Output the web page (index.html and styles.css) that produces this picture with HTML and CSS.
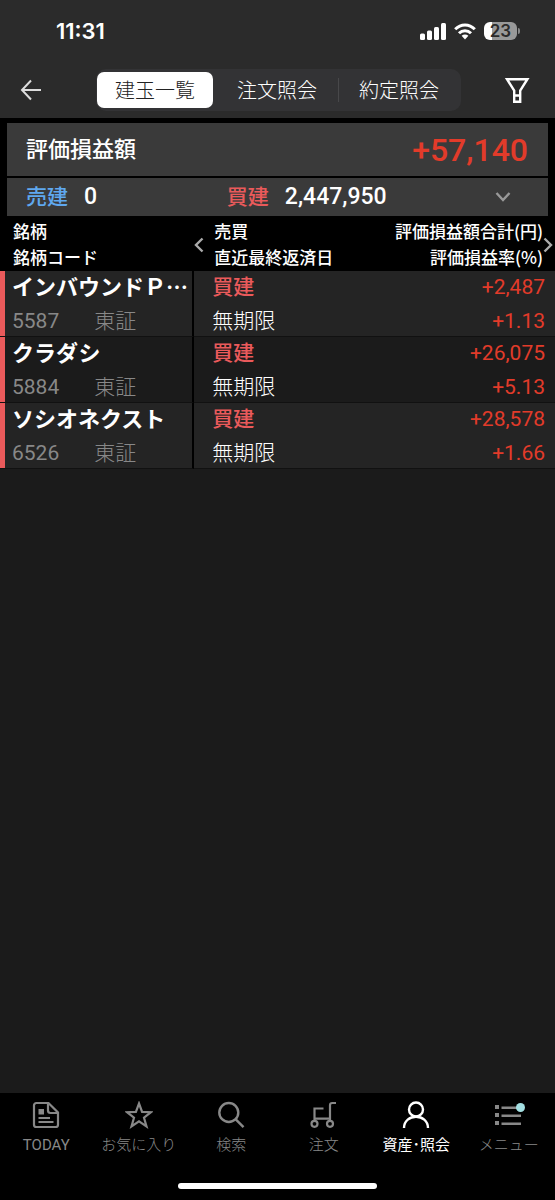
FILE: index.html
```html
<!DOCTYPE html>
<html lang="ja">
<head>
<meta charset="utf-8">
<meta name="viewport" content="width=device-width, initial-scale=1">
<title>建玉一覧</title>
<link rel="stylesheet" href="styles.css">
</head>
<body>
<div class="app">
  <header class="top">
    <div class="status">
      <span class="clock">11:31</span>
      <div class="status-icons">
        <svg width="26" height="17" viewBox="0 0 26 17" fill="#fff" aria-hidden="true">
          <rect x="0" y="10.500" width="5" height="6.500" rx="1.500"/><rect x="7" y="7.500" width="5" height="9.500" rx="1.500"/><rect x="14" y="4" width="5" height="13" rx="1.500"/><rect x="21" y="0" width="5" height="17" rx="1.500"/>
        </svg>
        <svg width="22" height="17" viewBox="0 0 22 17" fill="none" stroke="#fff" stroke-width="3" aria-hidden="true">
          <path d="M1.200 6.300C6.800.5 15.200.5 20.800 6.300"/><path d="M5 10.200c3.400-3.400 8.600-3.400 12 0"/><path d="M7.600 12.800c2-1.800 4.800-1.800 6.800 0L11 16.400z" fill="#fff" stroke="none"/>
        </svg>
        <span class="battery"><span class="battery-body">23</span><span class="battery-tip"></span></span>
      </div>
    </div>
    <nav class="navbar">
      <button class="icon-button" aria-label="戻る">
        <svg width="22" height="22" viewBox="0 0 22 22" fill="none" stroke="#ddd" stroke-width="2" aria-hidden="true"><path d="M11 1.500 2 11l9 9.500M2 11h19"/></svg>
      </button>
      <div class="segments">
        <button class="segment active" aria-pressed="true">建玉一覧</button>
        <button class="segment">注文照会</button>
        <button class="segment divided">約定照会</button>
      </div>
      <button class="icon-button" aria-label="絞り込み">
        <svg width="26" height="28" viewBox="0 0 26 28" fill="none" stroke="#fff" stroke-width="2.400" aria-hidden="true"><path d="M3 3.200h20.400L16.200 14.500v11.300h-6V14.500zM10.200 19.500h6"/></svg>
      </button>
    </nav>
  </header>

  <main>
    <section class="summary">
      <div class="summary-total"><h1>評価損益額</h1><strong>+57,140</strong></div>
      <div class="summary-sides">
        <div class="side sell"><span class="side-label">売建</span><span class="side-value">0</span></div>
        <div class="side buy"><span class="side-label">買建</span><span class="side-value">2,447,950</span></div>
        <button class="expand" aria-label="詳細を開く">
          <svg width="16" height="12" viewBox="0 0 16 12" fill="none" stroke="#999" stroke-width="2.400" aria-hidden="true"><path d="m1.500 2 6.500 7 6.500-7"/></svg>
        </button>
      </div>
    </section>

    <div class="positions">
      <table>
        <thead>
          <tr>
            <th class="name" scope="col">銘柄<br>銘柄コード</th>
            <th class="kind" scope="col">売買<br>直近最終返済日</th>
            <th class="profit" scope="col">評価損益額合計(円)<br>評価損益率(%)</th>
          </tr>
        </thead>
        <tbody>
          <tr><td class="name"><b>インバウンドＰ⋯</b><span class="code"><span class="number">5587</span><span>東証</span></span></td><td class="kind"><b>買建</b><span>無期限</span></td><td class="profit"><span>+2,487</span><span>+1.13</span></td></tr>
          <tr><td class="name"><b>クラダシ</b><span class="code"><span class="number">5884</span><span>東証</span></span></td><td class="kind"><b>買建</b><span>無期限</span></td><td class="profit"><span>+26,075</span><span>+5.13</span></td></tr>
          <tr><td class="name"><b>ソシオネクスト</b><span class="code"><span class="number">6526</span><span>東証</span></span></td><td class="kind"><b>買建</b><span>無期限</span></td><td class="profit"><span>+28,578</span><span>+1.66</span></td></tr>
        </tbody>
      </table>
      <button class="scroll previous" aria-label="前の列"><svg width="10" height="16" viewBox="0 0 10 16" fill="none" stroke="#aaa" stroke-width="2.400" aria-hidden="true"><path d="M8.500 1.500 2 8l6.500 6.500"/></svg></button>
      <button class="scroll next" aria-label="次の列"><svg width="10" height="16" viewBox="0 0 10 16" fill="none" stroke="#aaa" stroke-width="2.400" aria-hidden="true"><path d="M1.500 1.500 8 8l-6.500 6.500"/></svg></button>
    </div>
  </main>

  <footer class="bottom">
    <nav class="tabs">
      <a class="tab" href="#today">
        <svg width="28" height="28" viewBox="0 0 28 28" fill="none" stroke="currentColor" stroke-width="2.200" aria-hidden="true"><path d="M4.300 2h12.200L26 11.500v12.200a2.300 2.300 0 0 1-2.300 2.300H4.300A2.300 2.300 0 0 1 2 23.700V4.300A2.300 2.300 0 0 1 4.300 2zM16 2v7.500a2.500 2.500 0 0 0 2.500 2.500H26M6.500 17h11.500M6.500 21h15"/><path d="M6.500 8h5.500v5.500H6.500z" fill="currentColor" stroke="none"/></svg>
        <span class="latin">TODAY</span></a>
      <a class="tab" href="#favorites">
        <svg width="28" height="28" viewBox="0 0 28 28" fill="none" stroke="currentColor" stroke-width="2.200" aria-hidden="true"><path d="m14 2.500 3.100 8.400 9 .300-7.100 5.500 2.500 8.700-7.500-5-7.500 5L9 16.700l-7.100-5.500 9-.300z"/></svg>
        <span>お気に入り</span></a>
      <a class="tab" href="#search">
        <svg width="28" height="28" viewBox="0 0 28 28" fill="none" stroke="currentColor" stroke-width="2.400" aria-hidden="true"><circle cx="11.800" cy="11.500" r="9.500"/><path d="m18.500 18.200 8 8"/></svg>
        <span>検索</span></a>
      <a class="tab" href="#orders">
        <svg width="28" height="28" viewBox="0 0 28 28" fill="none" stroke="currentColor" stroke-width="2.200" aria-hidden="true"><circle cx="4.500" cy="22.800" r="3"/><circle cx="20" cy="22.800" r="3"/><path d="M13.500 7.500h-9v12.300M4.500 17.700H20M20 19.800V4.200q0-2.200 2.200-2.200H26"/></svg>
        <span>注文</span></a>
      <a class="tab current" href="#assets" aria-current="page">
        <svg width="28" height="28" viewBox="0 0 28 28" fill="none" stroke="currentColor" stroke-width="2.400" aria-hidden="true"><circle cx="14" cy="8.500" r="7"/><path d="M2 27c0-15 24-15 24 0"/></svg>
        <span>資産･照会</span></a>
      <a class="tab" href="#menu">
        <svg width="32" height="28" viewBox="0 0 32 28" aria-hidden="true"><path d="M2 4h4v4H2zM2 12h4v4H2zM2 20h4v4H2zM8.500 5.500H28v2.400H8.500zM8.500 13.500H28v2.400H8.500zM8.500 21.500H28v2.400H8.500z" fill="currentColor"/><circle cx="27.500" cy="6.500" r="4.500" fill="#a3dfe2"/></svg>
        <span>メニュー</span></a>
    </nav>
    <div class="home-indicator"></div>
  </footer>
</div>
</body>
</html>
```
FILE: styles.css
```css
* { box-sizing: border-box; }
body { margin: 0; background: #1b1b1b; color: #fff; font-family: Roboto, "Noto Sans CJK JP", sans-serif; }
button { padding: 0; border: 0; background: none; color: inherit; font: inherit; }
svg { display: block; }
.app { display: flex; flex-direction: column; min-height: 100vh; }
main { flex: 1; }

.top { background: #2b2b2b; }
.status { display: flex; align-items: center; justify-content: space-between; height: 62px; padding: 0 35px 0 56px; }
.clock { font: 600 22px/24px Inter, sans-serif; }
.status-icons { display: flex; align-items: center; gap: 8px; }
.battery { display: flex; align-items: center; gap: 1px; }
.battery-body { width: 33px; height: 18px; border-radius: 6px; background: linear-gradient(90deg, #fff 23%, #999 23%); color: #2b2b2b; font: 600 17px/18px Inter, sans-serif; text-align: center; }
.battery-tip { width: 2px; height: 6px; border-radius: 0 2px 2px 0; background: #888; }
.navbar { display: flex; align-items: center; height: 56px; padding: 0 25px 0 20px; }
.segments { display: flex; flex: 1; align-items: center; height: 42px; margin: 0 43px 0 54px; padding: 0 1px; border-radius: 10px; background: #333335; }
.segment { flex: 1; height: 36px; font-size: 20px; font-weight: 300; line-height: 38px; }
.segment.active { flex: 0 0 32%; margin-right: 3px; border-radius: 7px; background: #fff; color: #222; }
.segment.divided { background: linear-gradient(#48484a, #48484a) left center / 1px 24px no-repeat; }

.summary { display: grid; gap: 2px; padding: 5px 7px 0; background: #000; }
.summary-total, .summary-sides { display: flex; align-items: center; background: #3a3a3a; }
.summary-total { justify-content: space-between; height: 53px; padding: 0 20px 0 19px; }
.summary-total h1 { margin: 0; font-size: 22px; font-weight: 500; line-height: 32px; }
.summary-total strong { color: #e23b2a; font-size: 32px; font-weight: 500; line-height: 36px; }
.summary-sides { height: 38px; padding: 0 37px 0 19px; }
.side { display: flex; align-items: center; gap: 16px; font-weight: 500; line-height: 32px; }
.side-label { font-size: 21px; }
.side-value { font-size: 23px; }
.sell { width: 41%; }
.sell .side-label { color: #5fa8ef; }
.buy { padding-left: 2px; }
.buy .side-label, .kind b { color: #ea5a5b; }
.expand { margin-left: auto; }

.positions { position: relative; }
table { width: 100%; border-collapse: separate; border-spacing: 0; table-layout: fixed; }
th { height: 55px; padding: 0; background: #000; font-family: "Noto Sans CJK JP", sans-serif; font-size: 17px; font-weight: 500; line-height: 26px; text-align: left; white-space: nowrap; }
td { height: 66px; padding: 0; border-bottom: 1px solid #111; font-size: 21px; font-weight: 300; line-height: 33px; white-space: nowrap; vertical-align: top; }
td > b, td > span { display: block; height: 33px; }
td > b { font-weight: 500; }
td > :last-child { height: 32px; line-height: 34px; }
tbody tr:nth-child(odd) { background: #242424; }
tbody tr:nth-child(even) { background: #1b1b1b; }
.name { width: 35%; }
th.name { padding-left: 13px; }
td.name { padding-left: 12px; border-right: 2px solid #000; box-shadow: inset 5px 0 #ea5a5b; }
.name b { font-size: 22px; font-weight: 700; }
.code { color: #888; }
td .code { display: flex; gap: 35px; }
.number { font-weight: 400; }
.kind { width: 25%; }
th.kind { padding-left: 20px; }
td.kind { padding-left: 18px; }
th.profit { padding-right: 12px; text-align: right; }
td.profit { padding-right: 10px; color: #e23b2a; font-weight: 400; text-align: right; }
.scroll { position: absolute; top: 21px; }
.previous { left: 35%; }
.next { right: 2px; }

.bottom { padding: 7px 0 11px; background: #000; }
.tabs { display: grid; grid-template-columns: repeat(6, 1fr); height: 83px; }
.tab { display: flex; flex-direction: column; align-items: center; gap: 5px; padding-top: 1px; color: #888; font-size: 15px; font-weight: 300; line-height: 22px; text-decoration: none; white-space: nowrap; }
.tab.current, .latin { font-weight: 400; }
.tab.current { color: #fff; }
.home-indicator { width: 36%; height: 6px; margin: 0 auto; border-radius: 3px; background: #fff; }
```
